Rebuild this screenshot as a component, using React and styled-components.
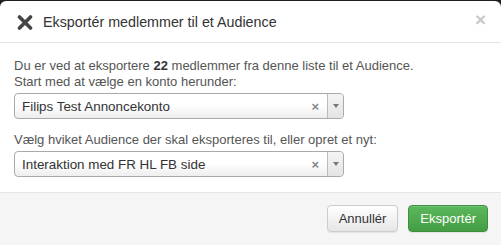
import React from 'react';
import styled, { createGlobalStyle } from 'styled-components';

const GlobalStyle = createGlobalStyle`
  html, body {
    margin: 0;
    padding: 0;
    background: #1f1f1f;
    font-family: "Liberation Sans", Arial, sans-serif;
  }`;

const Modal = styled.div`
  margin-top: 1px;
  height: 244px;
  background: #fff;
  border-radius: 6px 6px 0 0;
  display: flex;
  flex-direction: column;
  overflow: hidden;`;

const Header = styled.div`
  height: 42px;
  padding: 1px 15px 0 17px;
  box-sizing: border-box;
  border-bottom: 1px solid #e5e5e5;
  display: flex;
  align-items: center;`;

const Title = styled.h4`
  margin: 0 0 0 10px;
  font-size: 14.3px;
  font-weight: normal;
  color: #333;
  flex: 1;`;

const Close = styled.span`
  font-size: 19px;
  font-weight: bold;
  line-height: 1;
  color: #c8c8c8;
  margin-top: -6px;`;

const Body = styled.div`
  padding: 15px 14px 15px;
  font-size: 13px;
  line-height: 16px;
  color: #555;`;

const Line = styled.p`
  margin: 0;
  strong {
    color: #333;
  }`;

const Group = styled.div`
  margin-bottom: ${(props) => (props.last ? '0' : '13px')};`;

const SelectBox = styled.div`
  margin-top: 3px;
  width: 330px;
  height: 26px;
  box-sizing: border-box;
  border: 1px solid #aaa;
  border-radius: 4px;
  background: linear-gradient(to bottom, #fff 0%, #fff 45%, #eee 100%);
  display: flex;
  align-items: stretch;
  color: #333;
  font-size: 13.4px;`;

const SelectText = styled.span`
  flex: 1;
  padding: 2px 0 0 7px;
  display: flex;
  align-items: center;
  white-space: nowrap;`;

const Clear = styled.span`
  display: flex;
  align-items: center;
  padding: 2px 8px 0 0;
  font-size: 13px;
  font-weight: bold;
  color: #888;`;

const Arrow = styled.span`
  width: 15px;
  border-left: 1px solid #bbb;
  border-radius: 0 4px 4px 0;
  background: linear-gradient(to bottom, #f4f4f4 0%, #e4e4e4 100%);
  display: flex;
  align-items: center;
  justify-content: center;
  &::after {
    content: '';
    border-left: 3px solid transparent;
    border-right: 3px solid transparent;
    border-top: 4px solid #777;
  }`;

const Footer = styled.div`
  flex: 1;
  border-top: 1px solid #e5e5e5;
  background: #f5f5f5;
  padding: 12px 13px 0 0;
  display: flex;
  justify-content: flex-end;
  align-items: flex-start;
  gap: 10px;`;

const Button = styled.button`
  height: 27px;
  padding: 0 11px;
  font-family: "Liberation Sans", Arial, sans-serif;
  font-size: 13px;
  border-radius: 4px;
  border: 1px solid ${(props) => (props.primary ? '#3e8f3e' : '#ccc')};
  color: ${(props) => (props.primary ? '#fff' : '#333')};
  background: ${(props) => (props.primary
    ? 'linear-gradient(to bottom, #5cb85c 0%, #449d44 100%)'
    : 'linear-gradient(to bottom, #fff 0%, #e6e6e6 100%)')};
  box-shadow: inset 0 1px 0 rgba(255, 255, 255, 0.15), 0 1px 1px rgba(0, 0, 0, 0.075);`;

const TimesIcon = () => (
  <svg width="16" height="15" viewBox="0 0 16 15">
    <path
      d="M2.5 2 L13.5 13 M13.5 2 L2.5 13"
      stroke="#444"
      strokeWidth="3.6"
      strokeLinecap="round"
      fill="none"
    />
  </svg>
);

const Select = ({ value }) => (
  <SelectBox>
    <SelectText>{value}</SelectText>
    <Clear>×</Clear>
    <Arrow />
  </SelectBox>
);

const App = () => (
  <>
    <GlobalStyle />
    <Modal>
      <Header>
        <TimesIcon />
        <Title>Eksportér medlemmer til et Audience</Title>
        <Close>×</Close>
      </Header>
      <Body>
        <Group>
          <Line>
            Du er ved at eksportere <strong>22</strong> medlemmer fra denne liste til et Audience.
          </Line>
          <Line>Start med at vælge en konto herunder:</Line>
          <Select value="Filips Test Annoncekonto" />
        </Group>
        <Group last>
          <Line>Vælg hviket Audience der skal eksporteres til, eller opret et nyt:</Line>
          <Select value="Interaktion med FR HL FB side" />
        </Group>
      </Body>
      <Footer>
        <Button>Annullér</Button>
        <Button primary>Eksportér</Button>
      </Footer>
    </Modal>
  </>
);

export default App;
